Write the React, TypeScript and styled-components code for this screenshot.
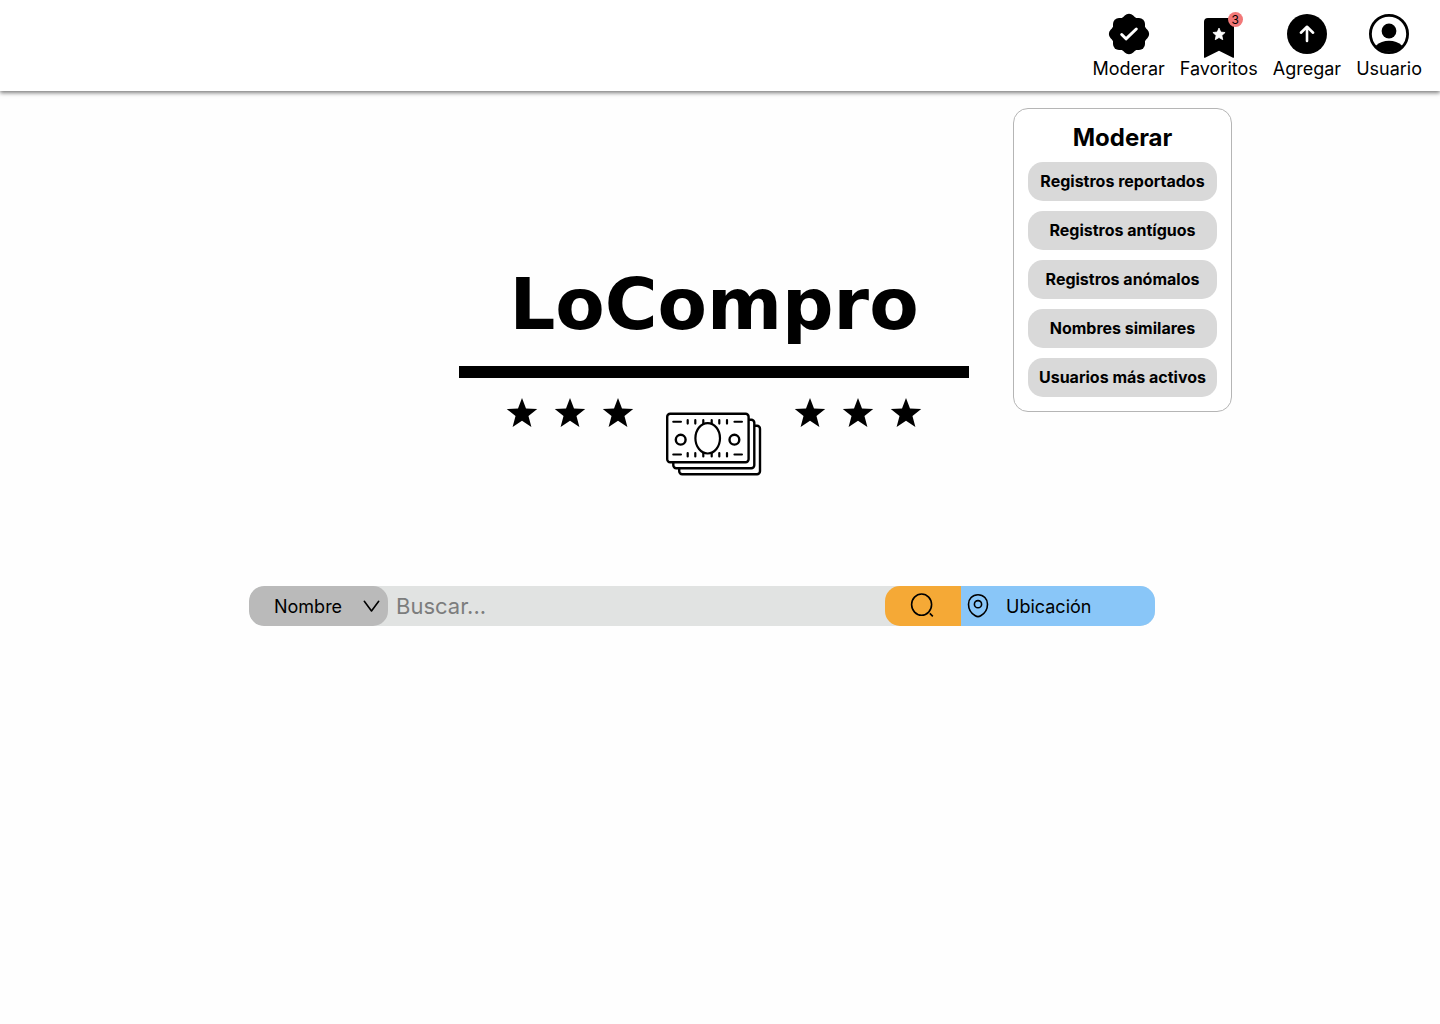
import React from "react";
import styled, { createGlobalStyle } from "styled-components";

const GlobalStyle = createGlobalStyle`
  *, *::before, *::after { box-sizing: border-box; }
  body {
    margin: 0;
    background: #fefefe;
    color: #000;
    font-family: Inter, "Liberation Sans", sans-serif;
  }
  button, input, select { font: inherit; color: inherit; }
`;

const Page = styled.div`
  position: relative;
  min-height: 100vh;
`;

const Header = styled.header`
  display: flex;
  justify-content: flex-end;
  padding: 14px 18px 12px;
  background: #fff;
  box-shadow: 0 2px 4px rgba(0, 0, 0, 0.5);
`;

const Nav = styled.nav`
  display: flex;
  gap: 15px;
`;

const NavButton = styled.button`
  display: flex;
  flex-direction: column;
  align-items: center;
  gap: 4px;
  padding: 0;
  border: 0;
  background: none;
  font-size: 18px;
  line-height: 21px;
  cursor: pointer;
`;

const IconBox = styled.span`
  position: relative;
  display: block;
  width: 40px;
  height: 40px;
  svg { display: block; overflow: visible; }
`;

const Badge = styled.span`
  position: absolute;
  top: -2px;
  right: -4px;
  width: 15px;
  height: 15px;
  border-radius: 50%;
  background: #f27878;
  font-size: 12px;
  line-height: 15px;
  text-align: center;
`;

const Menu = styled.section`
  position: absolute;
  top: 108px;
  right: 208px;
  display: flex;
  flex-direction: column;
  gap: 10px;
  padding: 14px;
  border: 1px solid #b5b5b5;
  border-radius: 15px;
  background: #fff;
`;

const MenuTitle = styled.h2`
  margin: 0;
  font-size: 24px;
  line-height: 29px;
  font-weight: 700;
  text-align: center;
`;

const MenuButton = styled.button`
  min-width: 189px;
  height: 39px;
  padding: 0 10px 2px;
  border: 0;
  border-radius: 15px;
  background: #d9d9d9;
  font-size: 16px;
  font-weight: 700;
  white-space: nowrap;
  cursor: pointer;
`;

const Main = styled.main`
  display: flex;
  flex-direction: column;
  align-items: center;
  gap: 109px;
  padding: 168px 36px 40px 0;
`;

const Brand = styled.div`
  display: flex;
  flex-direction: column;
  align-items: center;
  width: 510px;
  margin-left: 24px;
`;

const Wordmark = styled.h1`
  margin: 0;
  font-family: "DejaVu Sans", Inter, sans-serif;
  font-size: 72px;
  line-height: 91px;
  font-weight: 700;
`;

const Rule = styled.hr`
  width: 100%;
  height: 12px;
  margin: 16px 0 19px;
  border: 0;
  background: #000;
`;

const Emblem = styled.div`
  display: flex;
  align-items: flex-start;
  gap: 32px;
  svg { display: block; }
`;

const Stars = styled.div`
  display: flex;
  gap: 16px;
`;

const SearchForm = styled.form`
  display: flex;
  width: 906px;
  max-width: 100%;
  height: 40px;
  border-radius: 15px;
  overflow: hidden;
  background: #e1e3e2;
`;

const FieldPicker = styled.div`
  position: relative;
  width: 139px;
  svg {
    position: absolute;
    right: 8px;
    top: 12px;
    pointer-events: none;
  }
`;

const FieldSelect = styled.select`
  width: 100%;
  height: 100%;
  padding: 0 32px 0 25px;
  border: 0;
  border-radius: 15px;
  background: #bababa;
  font-size: 18px;
  appearance: none;
`;

const QueryInput = styled.input`
  flex: 1;
  min-width: 0;
  padding: 0 8px;
  border: 0;
  background: transparent;
  font-size: 22px;
  outline: none;
  &::placeholder { color: #7c7d7d; opacity: 1; }
`;

const SearchButton = styled.button`
  display: flex;
  align-items: center;
  justify-content: center;
  width: 76px;
  padding: 0;
  border: 0;
  border-radius: 15px 0 0 15px;
  background: #f5a936;
  cursor: pointer;
  svg { overflow: visible; }
`;

const LocationButton = styled.button`
  display: flex;
  align-items: center;
  gap: 16px;
  width: 194px;
  padding: 0 5px;
  border: 0;
  background: #89c6f8;
  font-size: 18px;
  cursor: pointer;
`;

const starPath = (cx: number, cy: number, r: number, inner: number) =>
  Array.from({ length: 10 }, (_, i) => {
    const radius = i % 2 ? inner : r;
    const a = (Math.PI / 5) * i - Math.PI / 2;
    return `${i ? "L" : "M"}${(cx + radius * Math.cos(a)).toFixed(2)} ${(cy + radius * Math.sin(a)).toFixed(2)}`;
  }).join("") + "Z";

const SealIcon = () => (
  <svg width="40" height="40" viewBox="0 0 40 40" aria-hidden="true">
    <circle cx="20" cy="20" r="17.6" />
    <rect x="4" y="4" width="32" height="32" rx="6" />
    <rect x="4" y="4" width="32" height="32" rx="6" transform="rotate(45 20 20)" />
    <path d="M12.7 20.5L17 24.8L27.3 15" fill="none" stroke="#fff" strokeWidth="3" strokeLinecap="round" strokeLinejoin="round" />
  </svg>
);

const BookmarkIcon = () => (
  <svg width="40" height="40" viewBox="0 0 40 40" aria-hidden="true">
    <path d="M9 4H31A4 4 0 0 1 35 8V43.2Q35 44.2 34 43.7L20 36.8L6 43.7Q5 44.2 5 43.2V8A4 4 0 0 1 9 4Z" />
    <path d={starPath(20, 20.5, 6.4, 3)} fill="#fff" stroke="#fff" strokeWidth="0.8" strokeLinejoin="round" />
  </svg>
);

const UploadIcon = () => (
  <svg width="40" height="40" viewBox="0 0 40 40" aria-hidden="true">
    <circle cx="20" cy="20" r="20" />
    <path d="M20 27V13M13.9 18.7L20 12.8L26.1 18.7" fill="none" stroke="#fff" strokeWidth="2.6" strokeLinecap="round" strokeLinejoin="round" />
  </svg>
);

const UserIcon = () => (
  <svg width="40" height="40" viewBox="0 0 40 40" aria-hidden="true">
    <circle cx="20" cy="20" r="18.6" fill="none" stroke="#000" strokeWidth="2.8" />
    <circle cx="20" cy="17" r="7.4" />
    <path d="M6.5 32C10.5 28 15 26.7 20 26.7S29.5 28 33.5 32A18.6 18.6 0 0 1 6.5 32Z" />
  </svg>
);

const StarIcon = () => (
  <svg width="32" height="32" viewBox="0 0 32 32" aria-hidden="true">
    <path d={starPath(16, 17, 16, 6.8)} />
  </svg>
);

const ticks = [21.7, 29.3, 37.3, 45.7, 53.3, 61];

const BillsIcon = () => (
  <svg width="96" height="80" viewBox="0 0 96 80" fill="none" stroke="#000" strokeWidth="2.4" strokeLinecap="round" aria-hidden="true">
    <rect x="13.2" y="28.7" width="80.8" height="48.5" rx="3" fill="#fff" />
    <rect x="7.3" y="22.7" width="81" height="48.5" rx="3" fill="#fff" />
    <rect x="1.2" y="16.7" width="81.4" height="48.5" rx="3" fill="#fff" />
    <path d="M7.2 24.8H15M68.4 24.8H76M7.2 57.5H15M68.4 57.5H76" strokeWidth="2" />
    {ticks.map((x) => (
      <path key={x} d={`M${x} 23.2V26.6M${x} 56V59.4`} strokeWidth="2.2" />
    ))}
    <ellipse cx="41.7" cy="41.3" rx="12.3" ry="15.2" fill="#fff" strokeWidth="2.2" />
    <circle cx="14.7" cy="42.7" r="4.9" />
    <circle cx="68.4" cy="42.7" r="4.9" />
  </svg>
);

const ChevronIcon = () => (
  <svg width="17" height="17" viewBox="0 0 17 17" fill="none" stroke="#000" strokeWidth="1.6" aria-hidden="true">
    <path d="M1.3 3.3L8.5 13L15.7 3.3" strokeLinecap="round" strokeLinejoin="round" />
  </svg>
);

const SearchIcon = () => (
  <svg width="24" height="24" viewBox="0 0 24 24" fill="none" stroke="#000" strokeWidth="1.6" aria-hidden="true">
    <ellipse cx="10.6" cy="10.6" rx="10" ry="10.6" />
    <path d="M18.8 19.4L21.8 22.4" />
  </svg>
);

const PinIcon = () => (
  <svg width="24" height="24" viewBox="0 0 24 24" fill="none" stroke="#000" strokeWidth="1.6" aria-hidden="true">
    <path d="M12 0.8C6.3 0.8 2.5 5 2.5 10.2C2.5 15.3 5.6 19.6 9.3 21.8C11.1 22.9 12.9 22.9 14.7 21.8C18.4 19.6 21.5 15.3 21.5 10.2C21.5 5 17.7 0.8 12 0.8Z" />
    <circle cx="12" cy="10.2" r="3.6" />
  </svg>
);

const navItems = [
  { label: "Moderar", icon: <SealIcon /> },
  { label: "Favoritos", icon: <BookmarkIcon />, count: 3 },
  { label: "Agregar", icon: <UploadIcon /> },
  { label: "Usuario", icon: <UserIcon /> },
];

const menuItems = [
  "Registros reportados",
  "Registros antíguos",
  "Registros anómalos",
  "Nombres similares",
  "Usuarios más activos",
];

const StarRow = () => (
  <Stars>
    <StarIcon />
    <StarIcon />
    <StarIcon />
  </Stars>
);

export default function App() {
  return (
    <Page>
      <GlobalStyle />
      <Header>
        <Nav>
          {navItems.map(({ label, icon, count }) => (
            <NavButton key={label} type="button">
              <IconBox>
                {icon}
                {count && <Badge>{count}</Badge>}
              </IconBox>
              {label}
            </NavButton>
          ))}
        </Nav>
      </Header>
      <Menu>
        <MenuTitle>Moderar</MenuTitle>
        {menuItems.map((item) => (
          <MenuButton key={item} type="button">{item}</MenuButton>
        ))}
      </Menu>
      <Main>
        <Brand>
          <Wordmark>LoCompro</Wordmark>
          <Rule />
          <Emblem>
            <StarRow />
            <BillsIcon />
            <StarRow />
          </Emblem>
        </Brand>
        <SearchForm onSubmit={(e) => e.preventDefault()}>
          <FieldPicker>
            <FieldSelect aria-label="Campo de búsqueda">
              <option>Nombre</option>
            </FieldSelect>
            <ChevronIcon />
          </FieldPicker>
          <QueryInput type="text" placeholder="Buscar..." aria-label="Buscar" />
          <SearchButton type="submit" aria-label="Buscar">
            <SearchIcon />
          </SearchButton>
          <LocationButton type="button">
            <PinIcon />
            Ubicación
          </LocationButton>
        </SearchForm>
      </Main>
    </Page>
  );
}
